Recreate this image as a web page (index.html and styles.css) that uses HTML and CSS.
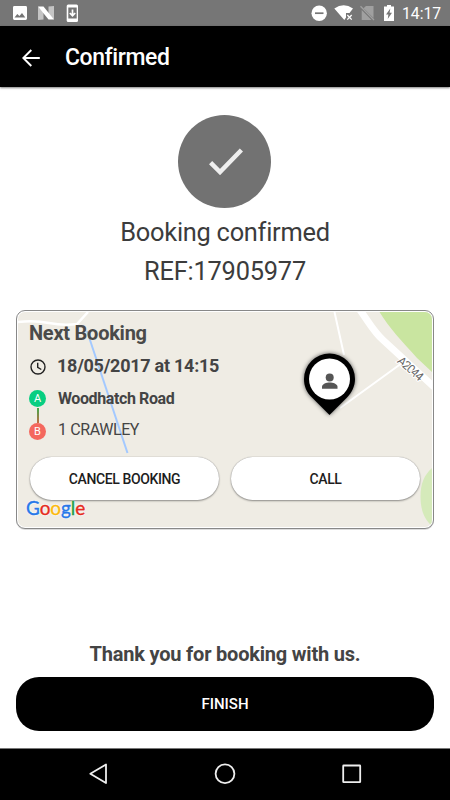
FILE: index.html
```html
<!DOCTYPE html>
<html lang="en">
<head>
<meta charset="utf-8">
<title>Confirmed</title>
<link rel="stylesheet" href="styles.css">
</head>
<body>
<div class="screen">
  <div class="status">
    <svg class="status-left" width="90" height="26" viewBox="0 0 90 26">
      <path fill="#fff" fill-rule="evenodd" d="M14.4 6H25.6Q27 6 27 7.400V18.600Q27 20 25.600 20H14.400Q13 20 13 18.600V7.400Q13 6 14.400 6ZM14.500 17.500H25.300L22 13L19.400 16L17.300 14Z"/>
      <path fill="#c4c4c4" d="M38 6.500L43.500 12V19.500L38 20ZM48.500 6.500L54 6V19.500L48.500 14Z"/>
      <path fill="#fff" d="M38 6.500H43.500L54 19.500H48.500Z"/>
      <rect x="66.700" y="4.500" width="11.300" height="17.500" rx="1.500" fill="#fff"/>
      <path fill="#767676" d="M68.300 7.500H76.700V18.500H68.300Z"/>
      <path stroke="#fff" stroke-width="1.700" fill="none" d="M72.500 9.500V15M69.800 13L72.500 15.800L75.200 13"/>
    </svg>
    <svg class="status-right" width="90" height="26" viewBox="308 0 90 26">
      <circle cx="319.200" cy="13.200" r="7.700" fill="#fff"/>
      <path d="M315 13.200H323.500" stroke="#767676" stroke-width="1.700"/>
      <path fill="#fff" d="M334.300 8.500Q343.700 2 353 8.500L349.500 13H346V17.500L344.300 20Z"/>
      <path stroke="#fff" stroke-width="1.300" d="M347.300 15L351.700 19.600M351.700 15L347.300 19.600"/>
      <path fill="#a0a0a0" d="M366 6H373.500V18L363.500 8.200ZM361.700 10L371.500 20H361.700Z"/>
      <path stroke="#a0a0a0" stroke-width="1.300" d="M360.500 6.300L374 20"/>
      <path fill="#fff" d="M387 5H391V6.500H394V21H384V6.500H387Z"/>
      <path fill="#767676" d="M390.300 8.500L386 14.500H388.400L387.700 19L392 12.800H389.600Z"/>
    </svg>
    <span class="clock">14:17</span>
  </div>

  <header class="appbar">
    <svg width="18" height="18" viewBox="0 0 18 18" fill="none" stroke="#fff" stroke-width="1.900"><path d="M17.800 9H1.500M9.300 1L1.300 9L9.300 17"/></svg>
    <h1>Confirmed</h1>
  </header>

  <main>
    <div class="tick">
      <svg width="34" height="27" viewBox="0 0 34 27" fill="none" stroke="#eee" stroke-width="4.500"><path d="M1.600 14.700L11 24L32.400 2"/></svg>
    </div>
    <p class="lead booked">Booking confirmed</p>
    <p class="lead ref">REF:17905977</p>

    <section class="card">
      <svg class="map" viewBox="18 312 414 215" preserveAspectRatio="none">
        <path fill="#efece4" d="M18 312H432V527H18Z"/>
        <g fill="none" stroke="#fff">
          <path stroke-width="2.500" d="M18 322Q34 320 49 323T77 324L88 312"/>
          <path stroke-width="2" d="M334.500 312L344 355M340 408L402 363"/>
          <path stroke-width="7" d="M360 310C370 324 374 332 383 340L434 387"/>
        </g>
        <path fill="#c9e5a0" d="M379.500 312H432V372L417 358C402 341 389 328 379.500 312Z"/>
        <path fill="#d5eaba" d="M432 468C424 475 420.500 484 420.500 496C420.500 510 424 519 432 526Z"/>
        <path fill="none" stroke="#a3c9ff" stroke-width="2" d="M87 331L127.500 453"/>
        <text class="road" transform="translate(396.500 362) rotate(41)" textLength="30">A2044</text>
      </svg>
      <svg class="pin" width="66" height="74" viewBox="296 346 66 74">
        <path class="pin-shape" d="M329.500 415L312 397.500C306.500 392.500 304 386 304 379A25.500 25.500 0 0 1 355 379C355 386 352 392.500 347 397.500Z"/>
        <circle cx="329.500" cy="379" r="20.500" fill="#fff"/>
        <circle cx="329.700" cy="377.500" r="4" fill="#555"/>
        <path fill="#555" d="M322 388.700V386.700C322 383.800 326.500 382.400 329.700 382.400S337.500 383.800 337.500 386.700V388.700Z"/>
      </svg>
      <h2>Next Booking</h2>
      <div class="row time">
        <svg width="18" height="18" viewBox="0 0 18 18" fill="none" stroke="#222" stroke-width="1.400"><circle cx="9" cy="9" r="7"/><path d="M8.700 4.700V9.300L12.300 11.500"/></svg>
        <span>18/05/2017 at 14:15</span>
      </div>
      <div class="row from"><i class="stop a">A</i><span>Woodhatch Road</span></div>
      <div class="row to"><i class="stop b">B</i><span>1 CRAWLEY</span></div>
      <div class="actions">
        <button>CANCEL BOOKING</button>
        <button>CALL</button>
      </div>
      <div class="google"><span class="bl">G</span><span class="rd">o</span><span class="yl">o</span><span class="bl">g</span><span class="gr">l</span><span class="rd">e</span></div>
    </section>

    <p class="thanks">Thank you for booking with us.</p>
    <button class="finish">FINISH</button>
  </main>

  <nav>
    <svg width="450" height="51" viewBox="0 749 450 51" fill="none" stroke="#eee" stroke-width="1.800" stroke-linejoin="round">
      <path d="M106 764.500V783L90.300 773.700Z"/>
      <circle cx="225" cy="773.700" r="9.400"/>
      <rect x="343.200" y="765.500" width="17" height="16.700" rx=".5"/>
    </svg>
  </nav>
</div>
</body>
</html>
```
FILE: styles.css
```css
* { box-sizing: border-box; }
body { margin: 0; font-family: Roboto, "Liberation Sans", sans-serif; background: #fff; }
h1, h2, p { margin: 0; white-space: nowrap; }
svg { display: block; flex: none; }
button { font: 500 14px Roboto, sans-serif; letter-spacing: -.4px; border: 0; padding: 0; }
.screen { width: 450px; height: 800px; display: flex; flex-direction: column; overflow: hidden; }
.status { height: 26px; background: #767676; display: flex; align-items: center; color: #fff; }
.status-right { margin-left: auto; }
.clock { width: 52px; padding-left: 4px; font-size: 15.7px; line-height: 26px; padding-top: 2px; }
.appbar { height: 61px; background: #000; display: flex; align-items: center; padding: 2px 0 0 22px; gap: 25px; box-shadow: 0 1px 2px rgba(0,0,0,.5); }
.appbar h1 { color: #fff; font-size: 23px; letter-spacing: -.42px; font-weight: 500; line-height: 30px; }
main { height: 661px; padding: 28px 16px 0; display: flex; flex-direction: column; }
.tick { align-self: center; width: 93px; height: 93px; margin-right: 1px; border-radius: 50%; background: #727272; display: flex; align-items: center; justify-content: center; padding-left: 2px; }
.lead { text-align: center; font-size: 25.4px; letter-spacing: -.26px; line-height: 38px; color: #3c3c3c; }
.booked { margin-top: 5px; }
.ref { margin-top: 1px; letter-spacing: -.2px; }
.card { position: relative; width: 418px; height: 219px; margin-top: 20px; border: 1px solid #888; border-radius: 9px; padding: 8px 12px 0; color: #444; background: #fff; box-shadow: 0 1px 0 #ddd; }
.map { position: absolute; left: 1px; top: 1px; width: 414px; height: 215px; border-radius: 7px; }
.road { font: 12px Roboto, sans-serif; fill: #666; stroke: #fff; stroke-width: 2px; paint-order: stroke; }
.pin { position: absolute; left: 279px; top: 35px; }
.pin-shape { fill: #000; filter: drop-shadow(0 0 2px #555); }
.card h2 { position: relative; font-size: 20px; letter-spacing: -.25px; line-height: 28px; font-weight: 700; color: #4a4a4a; }
.row { position: relative; display: flex; align-items: center; }
.row span { position: relative; white-space: nowrap; }
.time { height: 36px; gap: 10px; font-weight: 700; font-size: 18px; letter-spacing: -.26px; }
.time svg { margin-top: 3px; }
.from { height: 31px; font-weight: 700; font-size: 16px; letter-spacing: -.4px; gap: 12px; }
.to { height: 33px; font-size: 16px; letter-spacing: -.4px; gap: 12px; }
.to span { top: -1px; }
.stop { width: 17px; height: 17px; border-radius: 50%; color: #fff; font: 11px/18px Roboto, sans-serif; letter-spacing: 0; text-align: center; position: relative; }
.a { background: #08ce81; }
.b { background: #f4685e; top: 1px; }
.a::after { content: ""; position: absolute; left: 8px; top: 18px; width: 2px; height: 15px; background: linear-gradient(#3eaa4a, #c66b43); }
.actions { position: relative; display: flex; gap: 12px; margin: 10px 0 0 1px; }
.actions button { width: 189px; height: 43px; border-radius: 22px; background: #fff; color: #1d1d1d; box-shadow: 0 0 1px #888, 0 1px 2px rgba(0,0,0,.4); }
.google { position: absolute; left: 9px; top: 186px; font: 19px/22px Lato, sans-serif; letter-spacing: -.1px; -webkit-text-stroke: .4px; text-shadow: 0 0 2px #fff, 0 0 2px #fff, 0 0 1px #fff; }
.bl { color: #2878e8; }
.rd { color: #e52b20; }
.yl { color: #fbb90c; }
.gr { color: #26a047; }
.thanks { margin-top: 110px; text-align: center; font-size: 20px; letter-spacing: -.2px; line-height: 30px; font-weight: 700; color: #444; }
.finish { margin-top: 8px; width: 418px; height: 54px; flex: none; border-radius: 23px; background: #000; color: #fff; font-size: 15px; letter-spacing: 0; }
nav { height: 52px; flex: none; background: #000; border-top: 1px solid #777; }
```
